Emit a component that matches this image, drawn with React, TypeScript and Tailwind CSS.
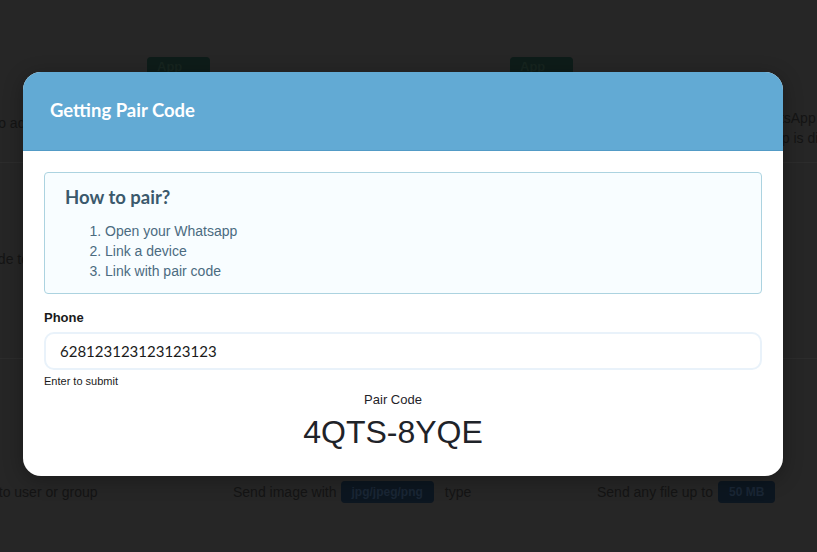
import React from 'react'

const sans = "font-['Liberation_Sans',Arial,sans-serif]"
const lato = "font-['Lato','Liberation_Sans',sans-serif]"

function Backdrop() {
  return (
    <div className={`absolute inset-0 overflow-hidden bg-[#262626] text-[14px] text-[#141414] ${sans}`}>
      <div className="ml-[-131px] w-[1092px]">
        <div className="grid h-[163px] grid-cols-3 border-b border-[#2c2c2c]">
          <div className="pt-[56px]">
            <span className="ml-[278px] inline-block h-[20px] w-[63px] rounded-t bg-[#0e1c19] pl-[10px] text-[13px] font-bold text-[#16241f]">App</span>
            <p className="mt-[36px] pl-[7px]">Scan the QR code to add device</p>
          </div>
          <div className="pt-[56px]">
            <span className="ml-[277px] inline-block h-[20px] w-[63px] rounded-t bg-[#0e1c19] pl-[10px] text-[13px] font-bold text-[#16241f]">App</span>
          </div>
          <div className="pt-[108px] leading-[20px]">
            <p className="pl-0">Reconnect and link your WhatsApp</p>
            <p className="pl-[5px]">Use this when your WhatsApp is disconnected</p>
          </div>
        </div>
        <div className="grid h-[196px] grid-cols-3 border-b border-[#2c2c2c]">
          <div className="pt-[86px]">
            <p className="pl-[2px]">Connect with pair code to link</p>
          </div>
          <div />
          <div />
        </div>
        <div className="grid grid-cols-3 pt-[122px]">
          <div className="flex h-[22px] items-center">
            <span className="pl-[6px]">Send text message to user or group</span>
          </div>
          <div className="flex h-[22px] items-center">
            <span>Send image with</span>
            <span className="ml-[4px] rounded bg-[#0c1620] px-[11px] py-[2px] text-[12px] font-bold text-[#1a2635]">jpg/jpeg/png</span>
            <span className="ml-[11px]">type</span>
          </div>
          <div className="flex h-[22px] items-center">
            <span>Send any file up to</span>
            <span className="ml-[5px] rounded bg-[#0c1620] px-[11px] py-[2px] text-[12px] font-bold text-[#1a2635]">50 MB</span>
          </div>
        </div>
      </div>
    </div>
  )
}

export default function App() {
  return (
    <div className="relative h-[552px] w-[817px] overflow-hidden">
      <Backdrop />
      <div className="absolute left-[23px] top-[72px] w-[760px] overflow-hidden rounded-[18px] bg-white shadow-[0_4px_20px_rgba(0,0,0,0.3)]">
        <div className="flex h-[79px] items-center border-b border-[#529bc6] bg-[#62aad4] px-[27px]">
          <h2 className={`${lato} text-[18.5px] font-bold text-white`}>Getting Pair Code</h2>
        </div>
        <div className="px-[21px] pb-[26px] pt-[21px]">
          <div className="rounded-[4px] border border-[#acd3e0] bg-[#f8fdff] px-[20px] pb-[12px] pt-[12px]">
            <h3 className={`${lato} text-[18.5px] font-bold leading-[24px] text-[#3b596c]`}>How to pair?</h3>
            <ol className={`${sans} mt-[12px] list-decimal pl-[40px] text-[14px] leading-[20px] text-[#4b6b7f]`}>
              <li>Open your Whatsapp</li>
              <li>Link a device</li>
              <li>Link with pair code</li>
            </ol>
          </div>
          <label className={`${sans} mt-[17px] block text-[13px] font-bold leading-[14px] text-[#1a1a1a]`}>Phone</label>
          <div className="mt-[7px] flex h-[38px] items-center rounded-[10px] border-2 border-[#e9f2fa] px-[14px]">
            <span className={`${lato} text-[15px] text-[#1a1a1a]`}>628123123123123123</span>
          </div>
          <p className={`${sans} mt-[5px] text-[11px] leading-[12px] text-[#1a1a1a]`}>Enter to submit</p>
          <div className={`${sans} pr-[20px] text-center text-[#1f2329]`}>
            <p className="mt-[5px] text-[13px] leading-[16px]">Pair Code</p>
            <p className="mt-[6px] text-[32px] leading-[36px]">4QTS-8YQE</p>
          </div>
        </div>
      </div>
    </div>
  )
}
